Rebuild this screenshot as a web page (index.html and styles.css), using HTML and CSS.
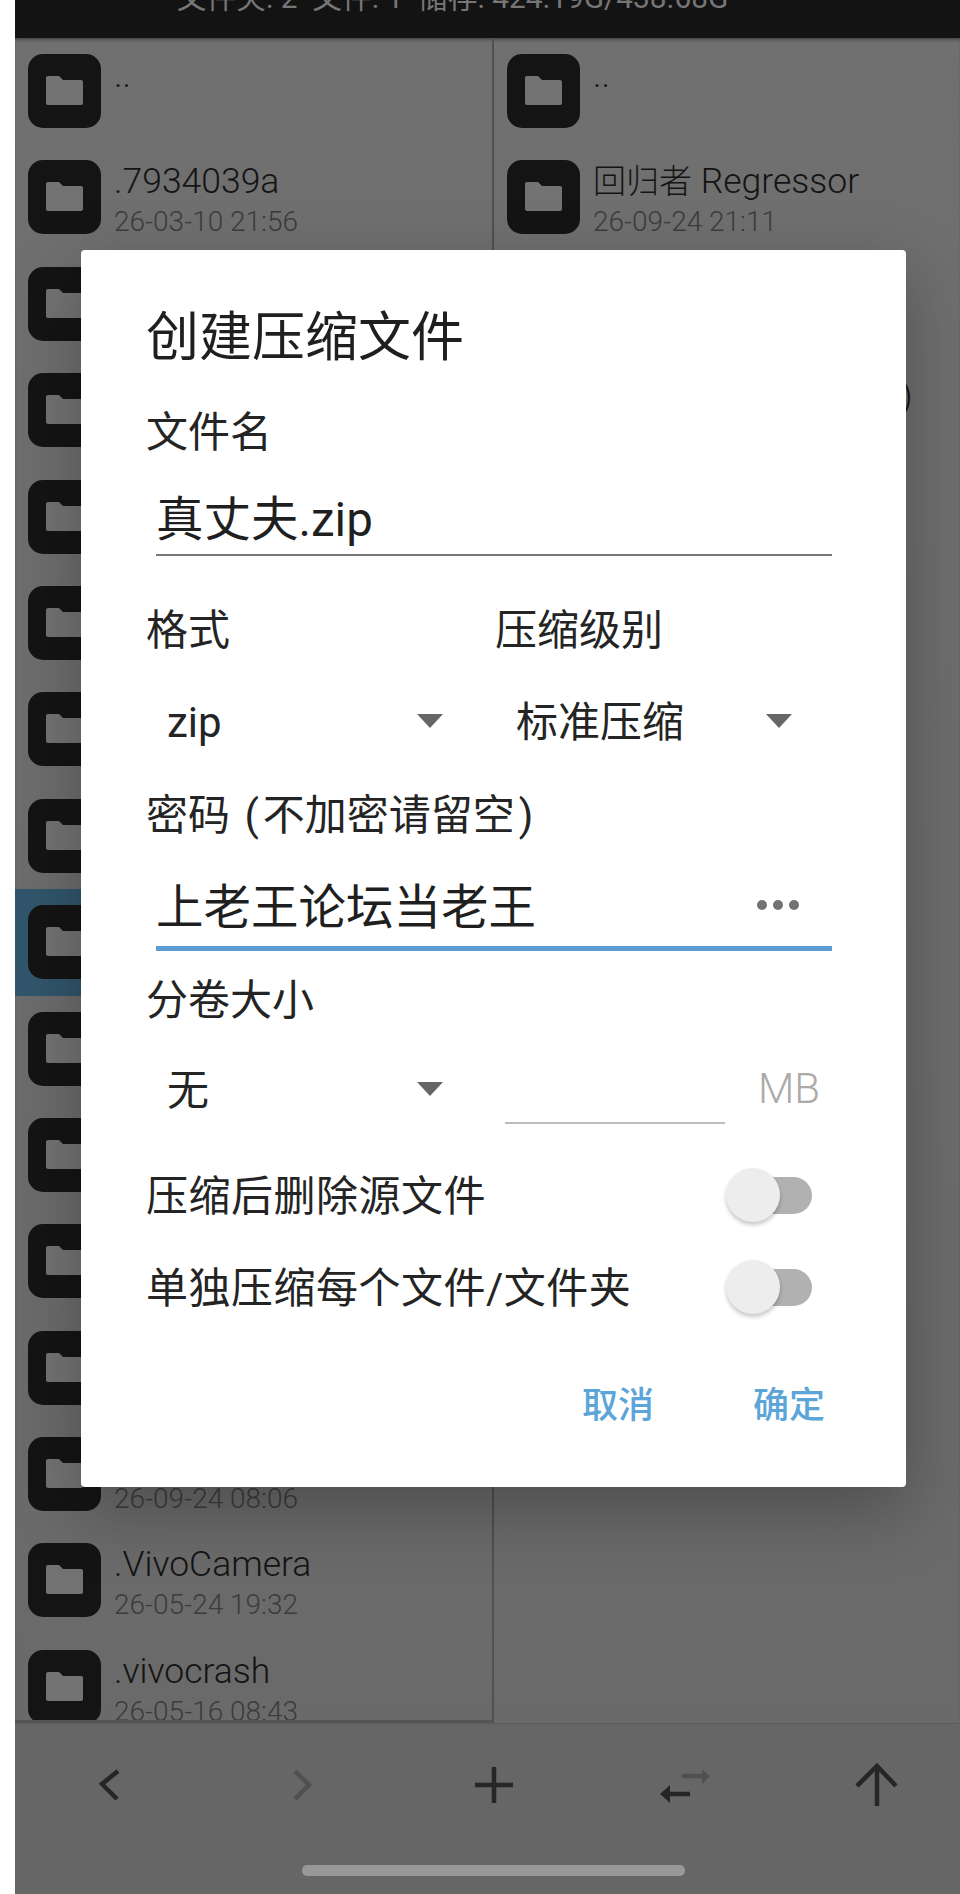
FILE: index.html
```html
<!DOCTYPE html>
<html lang="zh-CN">
<head>
<meta charset="utf-8">
<title>创建压缩文件</title>
<link rel="stylesheet" href="styles.css">
</head>
<body>
<svg class="defs" width="0" height="0" aria-hidden="true">
  <symbol id="folder" viewBox="0 0 73 74">
    <rect width="73" height="74" rx="15" fill="#141414"/>
    <path fill="#737373" d="M20 22h11l4 4h18a2 2 0 0 1 2 2v21a2 2 0 0 1-2 2H20a2 2 0 0 1-2-2V24a2 2 0 0 1 2-2z"/>
  </symbol>
</svg>
<div class="screen">
  <header class="status"><span class="status-text">文件夹: 2&nbsp; 文件: 1&nbsp; 储存: 424.19G/438.68G</span></header>
  <main class="panels">
    <section class="panel panel-left">
      <div class="row"><svg class="icon"><use href="#folder"/></svg><div class="info"><div class="name">..</div></div></div>
      <div class="row"><svg class="icon"><use href="#folder"/></svg><div class="info"><div class="name">.7934039a</div><div class="date">26-03-10 21:56</div></div></div>
      <div class="row"><svg class="icon"><use href="#folder"/></svg></div>
      <div class="row"><svg class="icon"><use href="#folder"/></svg></div>
      <div class="row"><svg class="icon"><use href="#folder"/></svg></div>
      <div class="row"><svg class="icon"><use href="#folder"/></svg></div>
      <div class="row"><svg class="icon"><use href="#folder"/></svg></div>
      <div class="row"><svg class="icon"><use href="#folder"/></svg></div>
      <div class="row row-active"><svg class="icon"><use href="#folder"/></svg></div>
      <div class="row"><svg class="icon"><use href="#folder"/></svg></div>
      <div class="row"><svg class="icon"><use href="#folder"/></svg></div>
      <div class="row"><svg class="icon"><use href="#folder"/></svg></div>
      <div class="row"><svg class="icon"><use href="#folder"/></svg></div>
      <div class="row"><svg class="icon"><use href="#folder"/></svg><div class="info"><div class="name">&nbsp;</div><div class="date">26-09-24 08:06</div></div></div>
      <div class="row"><svg class="icon"><use href="#folder"/></svg><div class="info"><div class="name">.VivoCamera</div><div class="date">26-05-24 19:32</div></div></div>
      <div class="row"><svg class="icon"><use href="#folder"/></svg><div class="info"><div class="name">.vivocrash</div><div class="date">26-05-16 08:43</div></div></div>
    </section>
    <section class="panel panel-right">
      <div class="row"><svg class="icon"><use href="#folder"/></svg><div class="info"><div class="name">..</div></div></div>
      <div class="row"><svg class="icon"><use href="#folder"/></svg><div class="info"><div class="name"><span class="cjk">回归者</span> Regressor</div><div class="date">26-09-24 21:11</div></div></div>
      <div class="row"><svg class="icon"><use href="#folder"/></svg></div>
      <div class="row"><svg class="icon"><use href="#folder"/></svg><div class="info"><div class="name name-tail">)</div></div></div>
    </section>
  </main>
  <footer class="toolbar">
    <div class="tools">
      <svg class="tool" viewBox="0 0 48 48"><path class="stroke dark" d="M32 10 16 23 31 38"/></svg>
      <svg class="tool" viewBox="0 0 48 48"><path class="stroke faint" d="M17 10 31 24 17 38"/></svg>
      <svg class="tool" viewBox="0 0 48 48"><path class="stroke dark" d="M24 6V42M5 24H43"/></svg>
      <svg class="tool" viewBox="0 0 48 48">
        <path class="stroke faint" d="M21 15H42"/><path class="fill faint-fill" d="M41 8 49 15 41 23z"/>
        <path class="stroke dark" d="M8 33H29"/><path class="fill dark-fill" d="M9 24V42L-1 33z"/>
      </svg>
      <svg class="tool" viewBox="0 0 48 48"><path class="stroke dark" d="M24 45V6M4 25 24 5 43 25"/></svg>
    </div>
    <div class="home-bar"></div>
  </footer>

  <div class="dialog" role="dialog">
    <h1 class="dialog-title">创建压缩文件</h1>
    <div class="label label-name">文件名</div>
    <div class="field field-name">真丈夫.zip</div>
    <div class="split split-labels">
      <div class="label">格式</div>
      <div class="label">压缩级别</div>
    </div>
    <div class="split split-spinners">
      <div class="spinner"><span>zip</span><i class="arrow"></i></div>
      <div class="spinner"><span>标准压缩</span><i class="arrow"></i></div>
    </div>
    <div class="label label-password">密码 <span class="paren">(</span>不加密请留空<span class="paren">)</span></div>
    <div class="field field-password">
      <span>上老王论坛当老王</span>
      <svg class="dots" viewBox="0 0 44 12"><circle cx="6" cy="6" r="5"/><circle cx="22" cy="6" r="5"/><circle cx="38" cy="6" r="5"/></svg>
    </div>
    <div class="label label-volume">分卷大小</div>
    <div class="volume">
      <div class="spinner"><span>无</span><i class="arrow"></i></div>
      <div class="volume-input"></div>
      <span class="unit">MB</span>
    </div>
    <div class="switches">
      <div class="switch-row"><span>压缩后删除源文件</span><div class="toggle"><i class="thumb"></i><i class="track"></i></div></div>
      <div class="switch-row"><span>单独压缩每个文件/文件夹</span><div class="toggle"><i class="thumb"></i><i class="track"></i></div></div>
    </div>
    <div class="actions">
      <span class="action">取消</span>
      <span class="action">确定</span>
    </div>
  </div>
</div>
</body>
</html>
```
FILE: styles.css
```css
* { box-sizing: border-box; }
html, body { margin: 0; padding: 0; background: #fff; }
body {
  width: 960px;
  height: 1894px;
  overflow: hidden;
  padding-left: 15px;
  font-family: "Roboto", "Noto Sans CJK SC", sans-serif;
  color: #242424;
}
.defs { position: absolute; }
.screen {
  position: relative;
  width: 945px;
  height: 1894px;
  display: flex;
  flex-direction: column;
  background: #6c6c6c;
}
.status {
  height: 38px;
  flex: none;
  overflow: hidden;
  display: flex;
  justify-content: center;
  background: #131313;
  padding-right: 70px;
}
.status-text {
  margin-top: -27px;
  font-size: 29.8px;
  line-height: 50px;
  color: #767676;
  white-space: nowrap;
  font-weight: 400;
}
.panels {
  height: 1685px;
  flex: none;
  display: grid;
  grid-template-columns: 479px 1fr;
  background: linear-gradient(#707070, #6a6a6a);
  box-shadow: inset 0 3px 3px -1px rgba(0,0,0,.35);
}
.panel { height: 1685px; overflow: hidden; }
.panel-left {
  border-right: 2px solid #505050;
  border-bottom: 3px solid #555;
}
.row {
  height: 106.4px;
  padding: 16px 0 0 13px;
  display: flex;
  gap: 13px;
}
.row-active { background: #31566b; }
.icon { width: 73px; height: 74px; flex: none; }
.info { min-width: 0; }
.name {
  height: 42px;
  font-size: 35.5px;
  line-height: 42px;
  font-weight: 300;
  color: #141414;
  white-space: nowrap;
}
.cjk { font-size: 33px; }
.name-tail { margin: 2px 0 0 308px; }
.date {
  margin-top: 4px;
  font-size: 28px;
  line-height: 32px;
  font-weight: 300;
  color: #3c3c3c;
  white-space: nowrap;
}
.toolbar {
  flex: 1;
  background: #666;
  border-top: 1px solid #5d5d5d;
  padding-top: 37px;
}
.tools {
  display: flex;
  justify-content: space-between;
  padding: 0 59px 0 71px;
}
.tool { width: 48px; height: 48px; overflow: visible; }
.stroke { fill: none; stroke-width: 4.5; }
.dark { stroke: #262626; }
.faint { stroke: #505050; }
.fill { stroke: none; }
.dark-fill { fill: #262626; }
.faint-fill { fill: #505050; }
.home-bar {
  width: 383px;
  height: 11px;
  margin: 56px 0 0 287px;
  border-radius: 5px;
  background: #989898;
}

.dialog {
  position: absolute;
  left: 66px;
  top: 250px;
  width: 825px;
  padding: 55px 0 52px 65px;
  background: #fff;
  border-radius: 4px;
  box-shadow: 0 24px 70px rgba(0,0,0,.28);
}
.dialog-title {
  height: 60px;
  margin: 0;
  font-size: 53px;
  line-height: 66px;
  font-weight: 400;
  color: #1f1f1f;
}
.label {
  height: 56px;
  font-size: 42px;
  line-height: 58px;
  white-space: nowrap;
}
.paren { margin: 0 4px; }
.label-name { margin-top: 39px; }
.field {
  width: 676px;
  margin-left: 10px;
  font-size: 47.5px;
  color: #1f1f1f;
}
.field-name {
  height: 72px;
  margin-top: 24px;
  line-height: 73px;
  border-bottom: 2px solid #777;
}
.split {
  display: grid;
  grid-template-columns: 349px 1fr;
}
.split-labels { margin-top: 46px; }
.split-spinners { margin-top: 28px; }
.spinner {
  width: 297px;
  height: 70px;
  padding-left: 21px;
  display: flex;
  align-items: center;
  justify-content: space-between;
  font-size: 42px;
}
.spinner span { line-height: 54px; height: 50px; }
.arrow {
  width: 0;
  height: 0;
  border-style: solid;
  border-width: 14px 13px 0;
  border-color: #666 transparent transparent;
}
.label-password { margin-top: 31px; }
.field-password {
  height: 78px;
  margin-top: 30px;
  padding-right: 32px;
  line-height: 70px;
  display: flex;
  justify-content: space-between;
  border-bottom: 5px solid #5b9dd2;
}
.dots {
  width: 44px;
  height: 12px;
  margin-top: 26px;
  fill: #737373;
}
.label-volume { margin-top: 21px; }
.volume {
  margin-top: 26px;
  display: flex;
  align-items: center;
}
.volume-input {
  width: 220px;
  height: 70px;
  margin-left: 62px;
  border-bottom: 2px solid #bbb;
}
.unit {
  margin-left: 33px;
  font-weight: 300;
  font-size: 42px;
  line-height: 50px;
  color: #aaa;
}
.switches { margin-top: 25px; width: 666px; }
.switch-row {
  height: 92px;
  display: flex;
  align-items: center;
  justify-content: space-between;
  font-size: 42px;
  white-space: nowrap;
}
.switch-row span { padding-bottom: 5px; letter-spacing: .5px; }
.toggle {
  display: flex;
  align-items: center;
}
.thumb {
  position: relative;
  z-index: 1;
  width: 54px;
  height: 54px;
  border-radius: 50%;
  background: #ededed;
  box-shadow: 0 3px 4px rgba(0,0,0,.22);
}
.track {
  width: 52px;
  height: 37px;
  margin-left: -20px;
  border-radius: 0 19px 19px 0;
  background: #b1b1b1;
}
.actions {
  margin-top: 42px;
  padding-right: 81px;
  display: flex;
  justify-content: flex-end;
  gap: 99px;
}
.action {
  font-size: 36px;
  line-height: 63px;
  height: 60px;
  font-weight: 500;
  color: #5ca5d8;
}
```
